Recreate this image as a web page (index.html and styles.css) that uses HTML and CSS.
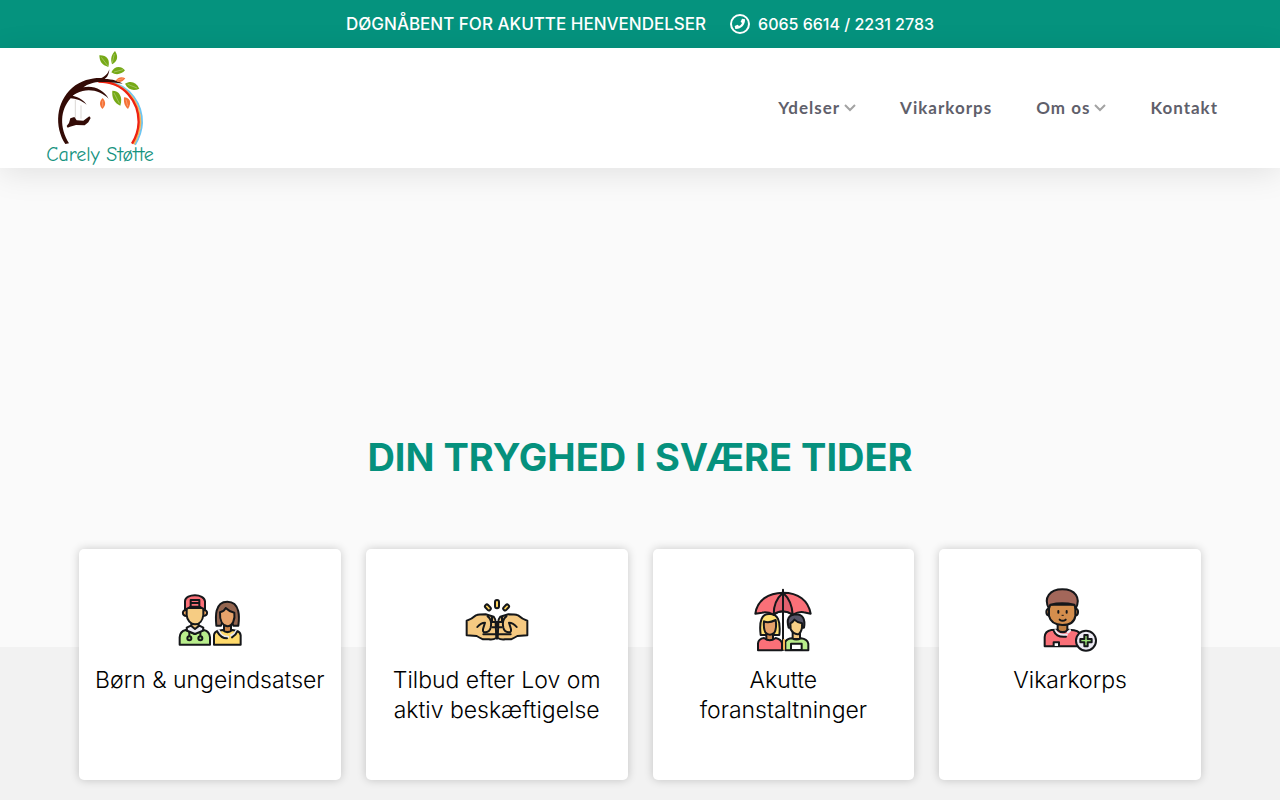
FILE: index.html
```html
<!DOCTYPE html>
<html lang="da">

<head>
	<meta charset="UTF-8">
	<meta name="viewport" content="width=device-width, initial-scale=1.0">
	<title>Carely Støtte</title>
	<link rel="stylesheet" href="styles.css">
</head>

<body>
	<div class="topbar">
		<span>DØGNÅBENT FOR AKUTTE HENVENDELSER</span>
		<a class="phone" href="tel:60656614">
			<svg class="phone-icon" viewBox="0 0 60 60" aria-hidden="true">
				<circle cx="30" cy="30" r="27" fill="none" stroke="#fff" stroke-width="6" />
				<path d="M36 14l9 2c1 17-12 30-29 29l-2-9 9-4 4 4c5-2 7-5 9-9l-4-4z" fill="#fff" />
			</svg>
			<span>6065 6614 / 2231 2783</span>
		</a>
	</div>

	<header class="header">
		<a class="logo" href="#" aria-label="Carely Støtte">
			<svg viewBox="48 18 324 348">
				<!-- rainbow -->
				<g fill="none">
					<path d="M238 114C302 126 337 181 336 237C335 262 327 282 315 302" stroke="#6cc5f2" stroke-width="6" />
					<path d="M228 114C295 124 331 180 331 235C330 260 322 281 311 301" stroke="#f6b45a" stroke-width="6" />
					<path d="M205 113C285 113 326 175 326 234C325 260 318 280 306 299" stroke="#ee2211" stroke-width="7" />
				</g>
				<!-- trunk and branches -->
				<path d="M106 300C72 248 78 174 126 132C154 107 190 101 214 102C228 96 234 88 238 76C237 92 231 101 224 105C248 105 266 112 278 119C252 114 230 113 213 114C192 114 173 120 160 130C190 123 222 138 236 164C216 144 186 134 158 141C144 145 134 150 128 155C148 160 164 171 170 182C152 168 136 164 122 163C90 199 88 250 117 298Z" fill="#330b06" />
				<!-- swing -->
				<path d="M136 168V228M153 184V224" stroke="#c9c2c0" stroke-width="2" fill="none" />
				<path d="M110 246L117 237L121 223L133 219L140 229L160 230L178 217L182 222L175 235L164 244L138 243L120 248L113 251Z" fill="#330b06" />
				<!-- leaves -->
				<g fill="#76a917">
					<path d="M208 34C230 33 241 47 235 69C215 63 209 53 208 34Z" />
					<path d="M255 21C267 39 261 53 246 61C240 42 246 31 255 21Z" />
					<path d="M244 85C253 65 273 64 285 79C275 91 258 95 244 85Z" />
					<path d="M285 119C302 109 319 114 328 134C310 142 294 137 285 119Z" />
					<path d="M247 140C268 140 279 158 271 185C252 176 245 161 247 140Z" />
				</g>
				<g fill="#f57236">
					<path d="M257 110C266 98 276 98 286 103C278 115 267 117 257 110Z" />
					<path d="M218 162C229 174 227 186 217 195C207 184 208 172 218 162Z" />
					<path d="M282 160C299 160 307 175 294 195C282 185 281 173 282 160Z" />
				</g>
				<path d="M214 40L233 65M253 30L247 56M252 84L279 77M293 121L321 132M252 147L268 178M262 108L280 104M218 170V188M288 167L293 187" stroke="#fff" stroke-opacity=".45" stroke-width="2" />
				<text class="logo-text" x="210" y="350" text-anchor="middle">Carely Støtte</text>
			</svg>
		</a>
		<nav class="nav">
			<a href="#">Ydelser
				<svg class="chevron" viewBox="0 0 12 8" aria-hidden="true"><path d="M1 1l5 5 5-5" /></svg>
			</a>
			<a href="#">Vikarkorps</a>
			<a href="#">Om os
				<svg class="chevron" viewBox="0 0 12 8" aria-hidden="true"><path d="M1 1l5 5 5-5" /></svg>
			</a>
			<a href="#">Kontakt</a>
		</nav>
	</header>

	<main>
		<section class="hero">
			<h1>DIN TRYGHED I SVÆRE TIDER</h1>
		</section>

		<section class="services">
			<div class="cards">
				<a class="card" href="#">
					<svg class="card-icon" viewBox="24 24 192 192" aria-hidden="true">
						<path d="M64 128h22v30H64z" fill="#f3c77f" />
						<path d="M29 194V172Q30 154 47 150L74 162L101 150Q119 154 120 172V194Z" fill="#b9ed8c" />
						<path d="M50 143L63 137L75 147L88 137L100 143L99 152L75 162L51 152Z" fill="#eceaf3" />
						<path d="M49 90C36 89 34 107 50 108M100 90C115 89 115 107 100 108" fill="#f3a95f" />
						<path d="M50 84H100V105C98 122 88 133 75 133C62 133 51 121 50 105Z" fill="#f6cc83" />
						<path d="M45 89V63C47 40 103 40 105 64V89L92 82H59Z" fill="#fa7078" />
						<path d="M62 78V60H88V78M62 69H88M61 80H90M58 157V170M91 157V170" />
						<circle cx="58" cy="175" r="6" fill="#8fcd65" />
						<circle cx="91" cy="175" r="6" fill="#8fcd65" />
						<path d="M139 137C137 115 132 65 172 65C212 65 208 115 205 137H190L185 125H158L153 137Z" fill="#946650" />
						<path d="M162 131V155L172 160L183 155V131Z" fill="#c98349" />
						<path d="M150 97Q163 94 167 84Q178 95 193 98C196 119 188 138 172 139C156 136 149 118 150 97Z" fill="#e7a36b" />
						<path d="M132 194V165Q133 156 144 152L158 150Q172 163 187 150L202 153Q211 157 212 166V194Z" fill="#ffda6b" />
						<path d="M146 151Q153 171 174 171M184 166Q195 163 199 152" stroke="#eceaf3" stroke-width="7" />
						<path d="M142 155Q153 175 171 175M186 172Q198 165 202 154" />
					</svg>
					<span>Børn &amp; ungeindsatser</span>
				</a>
				<a class="card" href="#">
					<svg class="card-icon" viewBox="24 24 192 192" aria-hidden="true">
						<rect x="114" y="60" width="12" height="25" rx="6" fill="#ffd45d" />
						<rect x="87" y="72" width="11" height="20" rx="5" fill="#ffd45d" transform="rotate(-43 93 82)" />
						<rect x="142" y="72" width="11" height="20" rx="5" fill="#ffd45d" transform="rotate(43 147 82)" />
						<path d="M29 122Q44 118 57 106Q66 103 86 103L110 110Q117 118 116 130L118 174Q108 180 96 178H78Q68 173 59 168L29 166Z" fill="#f5c981" />
						<path d="M211 122Q196 118 183 106Q174 103 154 103L130 110Q123 118 124 130L122 174Q132 180 144 178H162Q172 173 181 168L211 166Z" fill="#f5c981" />
						<path d="M61 141Q71 128 84 128L79 144Q75 158 85 157Q98 155 101 143Q106 119 92 109M179 141Q169 128 156 128L161 144Q165 158 155 157Q142 155 139 143Q134 119 148 109" />
						<path d="M105 111V126H135V111M106 142H134M79 163H161M120 126V142M120 158V176" />
					</svg>
					<span>Tilbud efter Lov om aktiv beskæftigelse</span>
				</a>
				<a class="card" href="#">
					<svg class="card-icon" viewBox="24 24 192 192" aria-hidden="true">
						<path d="M53 165Q45 101 79 102Q116 100 109 165Z" fill="#ffe071" />
						<path d="M70 155H90V178L80 184L70 178Z" fill="#cf8950" />
						<path d="M63 124Q77 131 98 120Q102 145 94 158Q80 171 67 157Q61 145 63 124Z" fill="#e5a16a" />
						<path d="M45 211V190Q46 177 63 174Q80 188 98 174Q115 178 117 190V211Z" fill="#fa7078" />
						<path d="M137 143Q126 105 158 103Q190 103 183 143Z" fill="#565467" />
						<path d="M149 153H171V177H149Z" fill="#f3c77f" />
						<path d="M142 130Q150 126 154 119Q163 128 177 130Q179 151 168 162Q152 165 143 148Z" fill="#f7cf85" />
						<path d="M127 211V185Q134 175 147 175Q160 182 174 175Q193 177 196 191V211Z" fill="#b9ed8c" />
						<path d="M144 210V191H176V210Z" fill="#fff" />
						<path d="M37 101C43 60 76 39 120 38C166 38 196 62 203 101L182 97Q168 94 149 104Q130 94 120 94Q106 94 92 104Q72 94 57 98Z" fill="#fa7078" />
						<path d="M92 104Q91 63 120 38Q147 62 149 104Q135 94 120 94Q103 94 92 104Z" fill="#e3606e" />
						<path d="M120 29V204M120 178V210" />
						<path d="M123 180V207" stroke="#f6b858" />
					</svg>
					<span>Akutte foranstaltninger</span>
				</a>
				<a class="card" href="#">
					<svg class="card-icon" viewBox="24 24 192 192" aria-hidden="true">
						<path d="M83 128H112V160L98 168L83 160Z" fill="#bd7d42" />
						<path d="M57 86C47 85 45 106 59 107M136 86C147 85 147 106 135 107" fill="#bd7d42" />
						<path d="M57 74H136V108Q132 135 97 135Q63 134 57 108Z" fill="#d48e4d" />
						<path d="M57 86C39 53 60 28 97 28C135 28 154 53 137 86L133 74Q96 66 61 74Z" fill="#a3675a" />
						<path d="M44 199V171Q45 153 64 150L82 149Q98 164 114 149L132 151Q153 155 154 173V199Z" fill="#fa7078" />
						<path d="M76 151Q82 168 110 164M114 157L120 151" stroke="#eceaf3" stroke-width="7" />
						<path d="M72 154Q79 173 108 170" />
						<path d="M85 93V98M110 93V98M89 119Q98 126 107 119" />
						<path d="M96 106H100" stroke-width="3" />
						<path d="M71 198V187H87V198" fill="#fff" />
						<circle cx="168" cy="182" r="30" fill="#eceaf3" />
						<path d="M163 165H173V177H185V187H173V199H163V187H151V177H163Z" fill="#9be078" />
					</svg>
					<span>Vikarkorps</span>
				</a>
			</div>
		</section>
	</main>
</body>

</html>
```
FILE: styles.css
```css
* {
	box-sizing: border-box;
}

body {
	margin: 0;
	font-family: Inter, sans-serif;
	background-color: #f2f2f2;
	color: #000;
}

a {
	color: inherit;
	text-decoration: none;
}

.topbar {
	display: flex;
	flex-wrap: wrap;
	justify-content: center;
	align-items: center;
	gap: 4px 24px;
	min-height: 48px;
	background-color: #05937e;
	color: #fff;
	font-size: 17px;
	line-height: 24px;
	font-weight: 500;
}

.phone {
	display: flex;
	align-items: center;
	gap: 8px;
	font-size: 16px;
}

.phone-icon {
	width: 20px;
	height: 20px;
}

.header {
	position: relative;
	display: flex;
	justify-content: space-between;
	align-items: center;
	min-height: 120px;
	padding: 0 62px 0 46px;
	background-color: #fff;
	box-shadow: 0 5px 30px rgba(0, 0, 0, 0.1);
}

.logo svg {
	display: block;
	width: 108px;
	height: 116px;
}

.logo-text {
	font-family: "Comic Neue", Lato, cursive;
	font-size: 60px;
	fill: #16937f;
}

.nav {
	display: flex;
	flex-wrap: wrap;
	gap: 8px 44px;
	font-family: Lato, sans-serif;
	font-size: 17px;
	line-height: 22px;
	font-weight: 700;
	letter-spacing: 1px;
	color: #5f606b;
}

.nav a {
	display: flex;
	align-items: center;
	gap: 4px;
}

.chevron {
	width: 12px;
	height: 8px;
	fill: none;
	stroke: #a3a3a3;
	stroke-width: 2;
}

.hero {
	display: flex;
	justify-content: center;
	align-items: flex-end;
	min-height: 479px;
	padding: 24px 24px 168px;
	background-color: #fafafa;
}

.hero h1 {
	margin: 0;
	font-size: 38px;
	line-height: 44px;
	font-weight: 700;
	color: #05917d;
	text-align: center;
}

.services {
	padding: 0 79px 20px;
}

.cards {
	display: grid;
	grid-template-columns: repeat(auto-fit, minmax(220px, 1fr));
	gap: 25px;
	margin-top: -98px;
}

.card {
	display: flex;
	flex-direction: column;
	align-items: center;
	gap: 13px;
	min-height: 231px;
	padding: 39px 14px 40px;
	background-color: #fff;
	border-radius: 5px;
	box-shadow: 0 0 10px rgba(0, 0, 0, 0.2);
	font-size: 23px;
	line-height: 30px;
	font-weight: 300;
	text-align: center;
}

.card-icon {
	width: 64px;
	height: 64px;
	fill: none;
	stroke: #15171a;
	stroke-width: 6;
	stroke-linecap: round;
	stroke-linejoin: round;
}
```
